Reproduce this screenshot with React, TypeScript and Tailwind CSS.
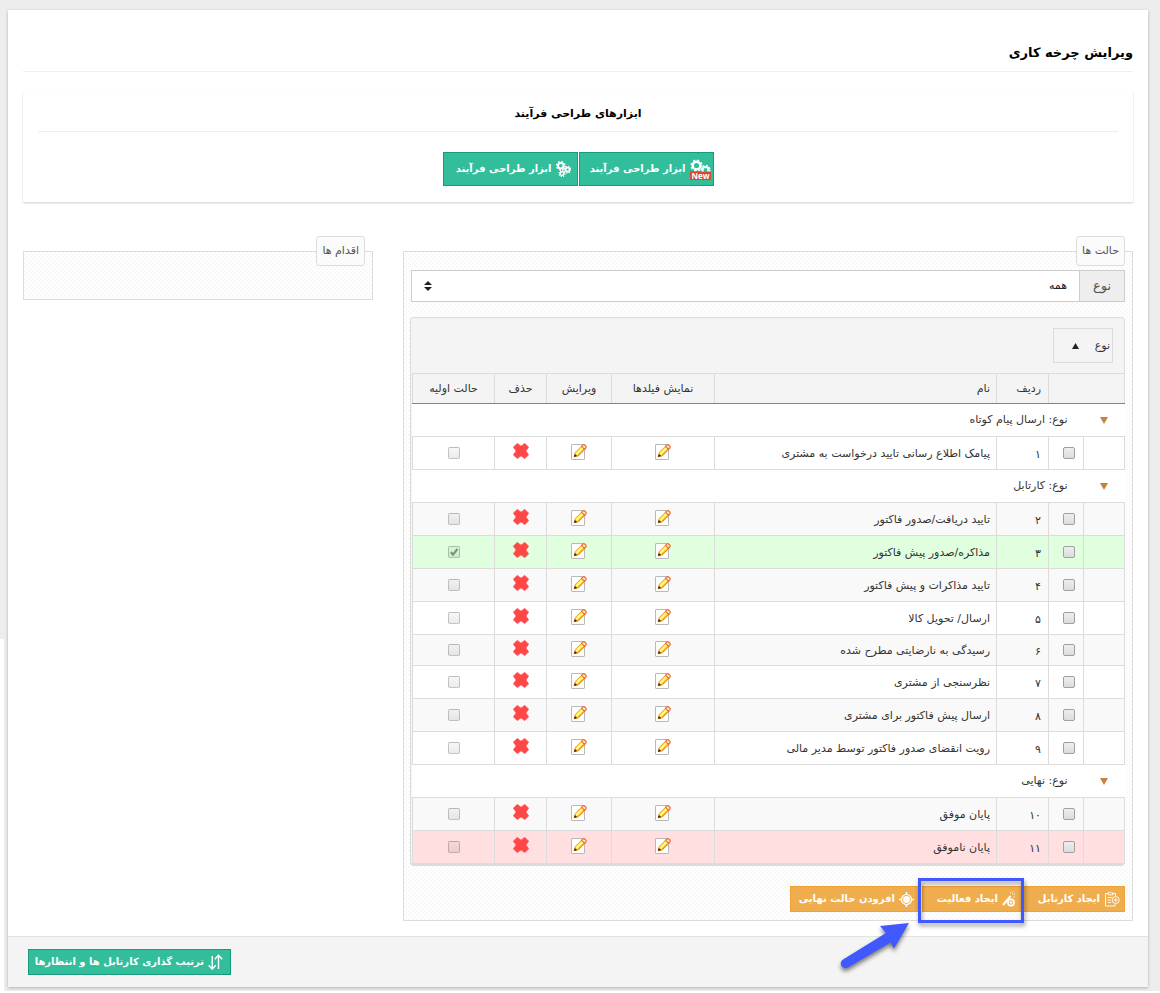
import React from "react";

type Tint = "white" | "alt" | "green" | "red";

type Row =
  | { kind: "group"; label: string }
  | { kind: "item"; no: string; name: string; tint: Tint; initial?: boolean; short?: boolean };

const rows: Row[] = [
  { kind: "group", label: "نوع: ارسال پیام کوتاه" },
  { kind: "item", no: "۱", name: "پیامک اطلاع رسانی تایید درخواست به مشتری", tint: "white" },
  { kind: "group", label: "نوع: کارتابل" },
  { kind: "item", no: "۲", name: "تایید دریافت/صدور فاکتور", tint: "alt" },
  { kind: "item", no: "۳", name: "مذاکره/صدور پیش فاکتور", tint: "green", initial: true },
  { kind: "item", no: "۴", name: "تایید مذاکرات و پیش فاکتور", tint: "alt" },
  { kind: "item", no: "۵", name: "ارسال/ تحویل کالا", tint: "white" },
  { kind: "item", no: "۶", name: "رسیدگی به نارضایتی مطرح شده", tint: "alt", short: true },
  { kind: "item", no: "۷", name: "نظرسنجی از مشتری", tint: "white" },
  { kind: "item", no: "۸", name: "ارسال پیش فاکتور برای مشتری", tint: "alt" },
  { kind: "item", no: "۹", name: "رویت انقضای صدور فاکتور توسط مدیر مالی", tint: "white" },
  { kind: "group", label: "نوع: نهایی" },
  { kind: "item", no: "۱۰", name: "پایان موفق", tint: "alt" },
  { kind: "item", no: "۱۱", name: "پایان ناموفق", tint: "red" },
];

const tints: Record<Tint, string> = {
  white: "bg-white",
  alt: "bg-[#f9f9f9]",
  green: "bg-[#dfffdf]",
  red: "bg-[#ffdfdf]",
};

const hatch =
  "bg-[repeating-conic-gradient(#f9f9f9_0_25%,#ffffff_0_50%)] bg-[length:4px_4px]";

function EditIcon() {
  return (
    <svg width="16" height="17" viewBox="0 0 16 17" className="block">
      <rect x="0.5" y="1.5" width="13" height="15" rx="0.5" fill="#fff" stroke="#b9b9b9" />
      <path d="M3.2 13.8 4.2 9.6 10.800 3l3.200 3.200-6.700 6.700z" fill="#ffe83a" stroke="#e0952a" strokeWidth="0.9" />
      <path d="M5.400 11 11.800 4.700" stroke="#fff9b8" strokeWidth="1.200" />
      <path d="M7 12.700 13.500 6.200" stroke="#f08a18" strokeWidth="1.100" />
      <path d="M10.500 3.300 12 1.900q.9-.7 1.700.1l1.200 1.200q.7.8 0 1.600L13.600 6.400z" fill="#ffe2c4" stroke="#ee6a2c" strokeWidth="1.100" />
      <path d="M2.900 14.100 3.900 10.900 6.200 13.100z" fill="#3a1c08" />
    </svg>
  );
}

function CrossIcon() {
  return (
    <svg width="16" height="16" viewBox="0 0 16 16" className="block">
      <path
        d="M4.200.400 8 3.200 11.800.400 15.600 4.200 12.800 8 15.600 11.800 11.800 15.600 8 12.800 4.200 15.600.400 11.800 3.200 8 .400 4.200z"
        fill="#ff4747"
        stroke="#ff4747"
        strokeWidth="0.8"
        strokeLinejoin="round"
      />
    </svg>
  );
}

function Gear({ cx, cy, r, w }: { cx: number; cy: number; r: number; w: number }) {
  const outer = r + w / 2 + 0.4;
  return (
    <g stroke="#fff" fill="none">
      <circle cx={cx} cy={cy} r={r} strokeWidth={w} />
      <circle cx={cx} cy={cy} r={outer} strokeWidth="1.4" strokeDasharray={`${outer * 0.3927} ${outer * 0.3927}`} />
    </g>
  );
}

function GearsNewIcon() {
  return (
    <svg width="21" height="21" viewBox="0 0 21 21" className="block shrink-0">
      <Gear cx={6.5} cy={6.5} r={3.8} w={2.4} />
      <Gear cx={15.5} cy={11} r={3} w={2.2} />
      <rect x="0" y="12.500" width="21" height="8.500" fill="#d9472f" />
      <text x="10.500" y="19.800" textAnchor="middle" fill="#fff" fontSize="8" fontWeight="700" fontFamily="Open Sans, sans-serif">
        New
      </text>
    </svg>
  );
}

function GearsIcon() {
  return (
    <svg width="15" height="16" viewBox="0 0 15 16" className="block shrink-0">
      <Gear cx={4.8} cy={4.8} r={2.8} w={2} />
      <Gear cx={11.6} cy={8.6} r={2} w={1.600} />
      <Gear cx={6} cy={12.6} r={1.8} w={1.400} />
    </svg>
  );
}

function ClipboardIcon() {
  return (
    <svg width="16" height="16" viewBox="0 0 16 16" className="block shrink-0" fill="none" stroke="#fff" strokeWidth="0.9">
      <path d="M4 2.500H1.500v12.500h9.500V13M9 2.500h2.500V5" />
      <path d="M4 1.800h1.500Q6.500 -.2 7.500 1.800H9v2H4z" />
      <path d="M3.500 6.500h5M3.500 9h3.500M3.500 11.500h3.500" />
      <circle cx="11.700" cy="9" r="3.500" />
      <path d="M11.700 7.200v3.600M9.900 9h3.600" />
    </svg>
  );
}

function WandIcon() {
  return (
    <svg width="14" height="16" viewBox="0 0 14 16" className="block shrink-0" fill="none" stroke="#fff">
      <path d="M1 14 8.700 5" strokeWidth="2" />
      <path d="M8 1.800h1M10.500 .800h1M12 3.300h1M11.500 6h1M10 2.800h1" strokeWidth="1.100" />
      <circle cx="9" cy="11.500" r="3.100" strokeWidth="1.600" />
      <path d="M9 10v3M7.500 11.500h3" strokeWidth="1" />
    </svg>
  );
}

function TargetIcon() {
  return (
    <svg width="15" height="15" viewBox="0 0 15 15" className="block shrink-0">
      <circle cx="7.500" cy="7.500" r="5" fill="none" stroke="#fff" strokeWidth="1.200" />
      <circle cx="7.500" cy="7.500" r="3.400" fill="#fff" />
      <path d="M7.500 0v3M7.500 12v3M0 7.500h3M12 7.500h3" stroke="#fff" strokeWidth="1.400" />
    </svg>
  );
}

function SortIcon() {
  return (
    <svg width="15" height="16" viewBox="0 0 15 16" className="block shrink-0" fill="none" stroke="#fff" strokeWidth="1.400">
      <path d="M10.500 15V1.500M6.800 5.200l3.700-3.900 3.700 3.900" />
      <path d="M4.200 2v13M.6 11.300l3.600 3.800 3.600-3.800" />
    </svg>
  );
}

function Check({ label, checked, disabled }: { label: string; checked?: boolean; disabled?: boolean }) {
  return (
    <span className="relative block size-3">
      <input
        type="checkbox"
        aria-label={label}
        defaultChecked={checked}
        disabled={disabled}
        className="peer block size-3 appearance-none rounded-xs border border-[#a0a0a0] bg-linear-to-b from-[#eeeeee] to-[#dcdcdc] disabled:border-black/20 disabled:from-black/3 disabled:to-black/8"
      />
      <svg viewBox="0 0 12 12" className="pointer-events-none absolute inset-0 hidden size-3 peer-checked:block">
        <path d="M2.800 6.300 5 8.600 9.500 2.800" fill="none" stroke="#7f917f" strokeWidth="2.200" />
      </svg>
    </span>
  );
}

function Panel({ title, children, className }: { title: string; children?: React.ReactNode; className: string }) {
  return (
    <section className={`border border-[#dcdcdc] px-[7px] ${hatch} ${className}`}>
      <h3 className="-mt-4 flex h-[30px] w-fit items-center rounded-[3px] border border-[#dcdcdc] bg-[#fbfbfb] px-[5px] text-[11px] text-[#555]">
        {title}
      </h3>
      {children}
    </section>
  );
}

function ItemRow({ row }: { row: Extract<Row, { kind: "item" }> }) {
  const cell = "border border-[#dcdcdc] p-0";
  return (
    <tr className={`${row.short ? "h-[31px]" : "h-[33px]"} ${tints[row.tint]}`}>
      <td className={cell}></td>
      <td className={`${cell} pr-2 pb-px`}>
        <Check label={`انتخاب ${row.name}`} />
      </td>
      <td className={`${cell} pt-1 pr-[7px]`}>{row.no}</td>
      <td className={`${cell} pt-px pr-[6px]`}>{row.name}</td>
      <td className={cell}>
        <button type="button" aria-label={`نمایش فیلدها ${row.name}`} className="mx-auto block pb-[3px]">
          <EditIcon />
        </button>
      </td>
      <td className={cell}>
        <button type="button" aria-label={`ویرایش ${row.name}`} className="mx-auto block pb-[3px]">
          <EditIcon />
        </button>
      </td>
      <td className={cell}>
        <button type="button" aria-label={`حذف ${row.name}`} className="mx-auto block pb-1">
          <CrossIcon />
        </button>
      </td>
      <td className={`${cell} pb-px`}>
        <div className="flex justify-center">
          <Check label={`حالت اولیه ${row.name}`} checked={row.initial} disabled />
        </div>
      </td>
    </tr>
  );
}

const green =
  "flex items-center gap-1 whitespace-nowrap border border-[#1b9a7b] bg-[#32bd9b] text-[10px] font-bold text-white";
const orange =
  "flex h-[26px] items-center gap-1 whitespace-nowrap border border-[#eea236] bg-[#f0ad4e] text-[10px] font-bold text-white";

export default function App() {
  const head = "border border-[#dcdcdc] border-b-[#e5632a] p-0 font-normal";
  return (
    <div
      dir="rtl"
      lang="fa"
      className="min-h-screen border-b-2 border-white bg-[#ededed] bg-[linear-gradient(#fff,#fff)] bg-[size:4px_100%] bg-[position:left_639px] bg-no-repeat pt-[10px] pr-3 pb-1 pl-2 font-['DejaVu_Sans',sans-serif] text-[11px] leading-4 text-[#333]"
    >
      <main className="bg-white shadow-[0_1px_3px_rgba(0,0,0,0.25)]">
        <div className="px-[15px] pt-[33px]">
          <h1 className="border-b border-[#eee] pb-2 text-[13px] leading-5 font-bold text-black">ویرایش چرخه کاری</h1>
          <section className="mt-5 px-[15px] pb-4 shadow-[0_1px_2px_rgba(0,0,0,0.2)]">
            <h2 className="border-b border-[#eee] pt-3 pb-[7px] text-center text-[11px] leading-5 font-bold text-black">
              ابزارهای طراحی فرآیند
            </h2>
            <div className="mt-5 flex justify-center gap-px">
              <button type="button" className={`${green} h-[34px] w-[135px] pr-[2px]`}>
                <GearsNewIcon />
                ابزار طراحی فرآیند
              </button>
              <button type="button" className={`${green} h-[34px] w-[135px] pr-[6px]`}>
                <GearsIcon />
                ابزار طراحی فرآیند
              </button>
            </div>
          </section>
        </div>

        <div className="mt-[49px] flex items-start pb-[15px]">
          <div className="w-2/3 px-[15px]">
            <Panel title="حالت ها" className="pb-2">
              <div className="mt-1 flex h-8 border border-[#ccc] bg-white">
                <label htmlFor="kind" className="flex w-[45px] items-center justify-center border-l border-[#ccc] bg-[#eee] text-[13px] text-[#555]">
                  نوع
                </label>
                <div className="relative flex-1">
                  <select id="kind" className="h-full w-full appearance-none bg-transparent pr-3 pl-8 text-[#222]">
                    <option>همه</option>
                  </select>
                  <svg width="8" height="10" viewBox="0 0 8 10" className="pointer-events-none absolute top-[10px] left-3">
                    <path d="M0 4 4 0l4 4zM0 6h8l-4 4z" fill="#222" />
                  </svg>
                </div>
              </div>

              <div className="mt-[15px] -ml-px rounded border border-b-2 border-[#dcdcdc] bg-[#f4f4f4]">
                <div className="px-[11px] py-[10px]">
                  <button type="button" className="flex h-[35px] w-[60px] items-center justify-between border border-[#dcdcdc] pr-[2px] pl-[18px]">
                    نوع
                    <svg width="7" height="6" viewBox="0 0 7 6">
                      <path d="M0 6 3.500 0 7 6z" fill="#222" />
                    </svg>
                  </button>
                </div>
                <div className="-mr-px ml-px">
                  <table className="w-full table-fixed border-collapse bg-white text-right">
                    <colgroup>
                      <col className="w-[41px]" />
                      <col className="w-[35px]" />
                      <col className="w-[52px]" />
                      <col />
                      <col className="w-[103px]" />
                      <col className="w-[65px]" />
                      <col className="w-[52px]" />
                      <col className="w-[82px]" />
                    </colgroup>
                    <thead>
                      <tr className="h-[30px] bg-[#f4f4f4]">
                        <th className={head} colSpan={2}></th>
                        <th className={`${head} pr-[7px]`}>ردیف</th>
                        <th className={`${head} pr-[6px]`}>نام</th>
                        <th className={`${head} text-center`}>نمایش فیلدها</th>
                        <th className={`${head} text-center`}>ویرایش</th>
                        <th className={`${head} text-center`}>حذف</th>
                        <th className={`${head} text-center`}>حالت اولیه</th>
                      </tr>
                    </thead>
                    <tbody>
                      {rows.map((row) =>
                        row.kind === "group" ? (
                          <tr key={row.label} className="h-[33px]">
                            <td className="p-0">
                              <svg width="8" height="7" viewBox="0 0 8 7" className="mx-auto block">
                                <path d="M0 0h8L4 7z" fill="#c8803f" />
                              </svg>
                            </td>
                            <td className="p-0 pr-4 whitespace-nowrap" colSpan={7}>
                              {row.label}
                            </td>
                          </tr>
                        ) : (
                          <ItemRow key={row.no} row={row} />
                        ),
                      )}
                    </tbody>
                  </table>
                </div>
              </div>

              <div className="mt-5 flex gap-px">
                <button type="button" className={`${orange} w-[102px] pr-1`}>
                  <ClipboardIcon />
                  ایجاد کارتابل
                </button>
                <div className="relative">
                  <button type="button" className={`${orange} w-[100px] pr-[5px]`}>
                    <WandIcon />
                    ایجاد فعالیت
                  </button>
                  <span className="pointer-events-none absolute -top-2 -right-0.5 -left-1 h-[45px] border-3 border-[#4059ff] drop-shadow-[1px_3px_2px_rgba(0,0,0,0.4)]" />
                  <svg
                    width="80"
                    height="60"
                    viewBox="0 0 80 60"
                    className="pointer-events-none absolute top-[34px] right-[104px] drop-shadow-[0_3px_2px_rgba(0,0,0,0.5)]"
                  >
                    <path
                      d="M71 3 56 28.500 52.500 22.500 10 47.500A4.600 4.600 0 0 1 5 39.500L48 13 42 6z"
                      fill="#4059ff"
                    />
                  </svg>
                </div>
                <button type="button" className={`${orange} w-[131px] pr-[6px]`}>
                  <TargetIcon />
                  افزودن حالت نهایی
                </button>
              </div>
            </Panel>
          </div>
          <div className="w-1/3 px-[15px]">
            <Panel title="اقدام ها" className="pb-[33px]" />
          </div>
        </div>

        <footer className="flex justify-end border-t border-[#e2e2e2] bg-[#f4f4f4] px-5 py-3">
          <button type="button" className={`${green} h-[26px] w-[203px] pr-[7px]`}>
            <SortIcon />
            ترتیب گذاری کارتابل ها و انتظارها
          </button>
        </footer>
      </main>
    </div>
  );
}
